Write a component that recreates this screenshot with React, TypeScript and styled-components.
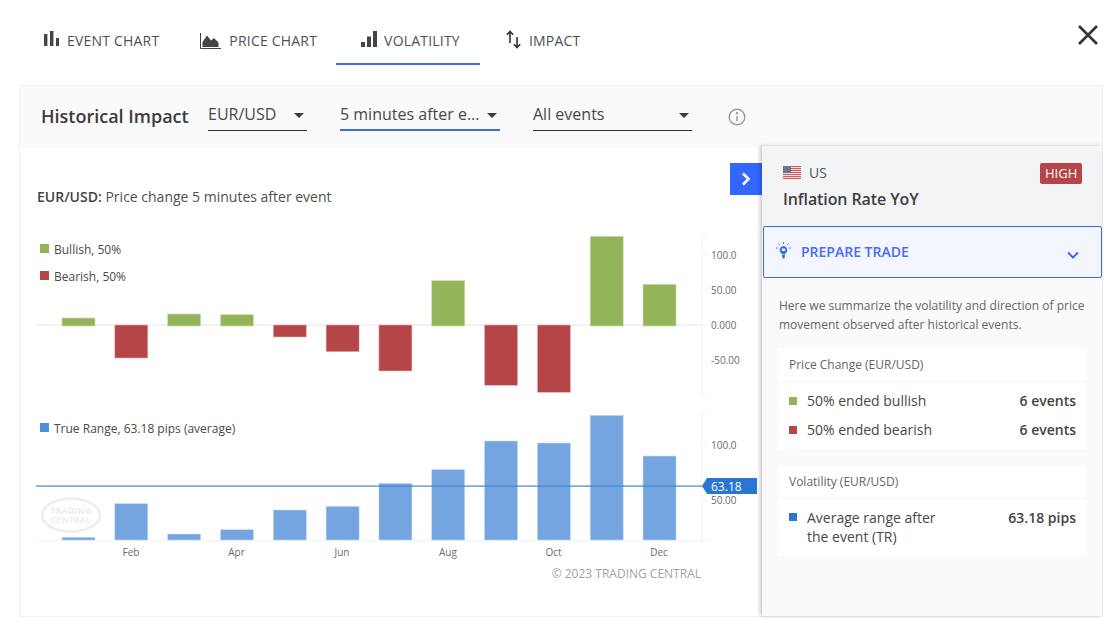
import React from "react";
import styled, { createGlobalStyle } from "styled-components";

const Global = createGlobalStyle`
  html, body { margin: 0; padding: 0; background: #fff; overflow: hidden; }
  body { font-family: "Open Sans", "Liberation Sans", sans-serif; color: #444; }
  * { box-sizing: border-box; }
`;

const Page = styled.div`
  width: 1113px;
  height: 642px;
  display: flex;
  flex-direction: column;
`;
const TopBar = styled.div`
  height: 65px;
  display: flex;
  padding: 0 15px 0 18px;
  justify-content: space-between;
`;
const Tabs = styled.div`
  display: flex;
`;
const Tab = styled.div<{ $active?: boolean; $end: number; $gap?: number }>`
  height: 65px;
  display: flex;
  align-items: center;
  gap: ${(p) => p.$gap ?? 8}px;
  padding: 32px ${(p) => p.$end}px 14px 20px;
  font-size: 14px;
  letter-spacing: 0.2px;
  font-weight: 500;
  color: #505050;
  white-space: nowrap;
  border-bottom: 2px solid ${(p) => (p.$active ? "#3b6cf0" : "transparent")};
`;
const TabIcon = styled.span<{ $lift: number }>`
  width: 21px;
  height: 20px;
  display: flex;
  justify-content: flex-end;
  align-items: center;
  margin-bottom: ${(p) => p.$lift}px;
`;
const CloseButton = styled.div`
  padding-top: 25px;
  line-height: 0;
`;
const Panel = styled.div`
  margin: 20px 10px 0 19px;
  height: 532px;
  border: 1px solid #f2f2f2;
  display: flex;
  flex-direction: column;
`;
const FilterBar = styled.div`
  height: 60px;
  background: #fafafa;
  display: flex;
  align-items: center;
  padding-left: 21px;
`;
const Heading = styled.div`
  font-size: 18px;
  font-weight: 600;
  color: #3c3c3c;
  width: 147px;
  white-space: nowrap;
  margin-right: 20px;
`;
const Select = styled.div<{ $width: number; $focus?: boolean }>`
  width: ${(p) => p.$width}px;
  height: 32px;
  margin-right: 33px;
  margin-top: -2px;
  display: flex;
  align-items: center;
  justify-content: space-between;
  padding: 0 3px 1px 0;
  font-size: 16px;
  color: #484848;
  white-space: nowrap;
  border-bottom: ${(p) => (p.$focus ? "2px solid #3b6cf0" : "1px solid #333")};
`;
const Caret = styled.span`
  width: 0;
  height: 0;
  border-left: 5.5px solid transparent;
  border-right: 5.5px solid transparent;
  border-top: 5.5px solid #3c3c3c;
  margin-top: 3px;
`;
const InfoIcon = styled.span`
  margin-left: 3px;
  line-height: 0;
  margin-top: 2px;
`;
const Body = styled.div`
  flex: 1;
  display: flex;
  min-height: 0;
`;
const ChartArea = styled.div`
  width: 742px;
  position: relative;
  border-top: 1px solid #f5f5f5;
  background: #fff;
`;
const ChartTitle = styled.div`
  padding: 40px 0 0 17px;
  height: 60px;
  font-size: 14px;
  line-height: 20px;
  color: #505050;
  b {
    font-weight: 600;
    color: #444;
  }
`;
const ChartSvg = styled.svg`
  display: block;
  font-family: "Open Sans", "Liberation Sans", sans-serif;
`;
const CollapseButton = styled.div`
  position: absolute;
  right: 0;
  top: 16px;
  width: 32px;
  height: 32px;
  background: #3366ff;
  display: flex;
  align-items: center;
  justify-content: center;
`;
const Sidebar = styled.div`
  width: 340px;
  background: #fafafa;
  box-shadow: -2px 0 4px rgba(0, 0, 0, 0.22);
  position: relative;
`;
const EventHead = styled.div`
  height: 80px;
  background: #f3f4f6;
  padding: 17px 20px 0 21px;
`;
const EventRow = styled.div`
  height: 21px;
  display: flex;
  align-items: center;
  font-size: 14px;
  color: #555;
`;
const CountryName = styled.span`
  margin-top: -2px;
`;
const Flag = styled.span`
  line-height: 0;
  margin-right: 8px;
  margin-top: -2px;
`;
const Impact = styled.span`
  margin-left: auto;
  height: 21px;
  padding: 0 5px;
  width: 42px;
  background: #b54547;
  border-radius: 2px;
  color: #fff;
  font-size: 13px;
  line-height: 21px;
  text-align: center;
`;
const EventTitle = styled.div`
  margin-top: 4px;
  font-size: 16px;
  line-height: 22px;
  font-weight: 600;
  letter-spacing: -0.1px;
  color: #3f3f3f;
`;
const Prepare = styled.div`
  height: 52px;
  margin-left: 1px;
  border: 1px solid #3b6cf0;
  border-radius: 2px;
  background: #f3f6ff;
  display: flex;
  align-items: center;
  padding: 0 22px 2px 12px;
  color: #4a6cf7;
  font-size: 14px;
  font-weight: 600;
`;
const PrepareLabel = styled.span`
  margin-left: 10px;
  flex: 1;
`;
const BulbWrap = styled.span`
  line-height: 0;
  margin-bottom: 2px;
`;
const ChevronWrap = styled.span`
  line-height: 0;
  margin-top: 7px;
`;
const Description = styled.p`
  margin: 18px 16px 14px 17px;
  font-size: 12px;
  line-height: 19px;
  color: #666;
  white-space: nowrap;
`;
const Card = styled.div`
  margin: 0 16px 16px 17px;
  background: #fff;
`;
const CardHead = styled.div`
  height: 34px;
  padding: 0 10px;
  border-bottom: 1px solid #f5f5f5;
  font-size: 12px;
  line-height: 33px;
  color: #666;
`;
const CardBody = styled.div<{ $pad: string }>`
  padding: ${(p) => p.$pad};
`;
const StatRow = styled.div<{ $top?: boolean }>`
  min-height: 29px;
  display: flex;
  align-items: ${(p) => (p.$top ? "flex-start" : "center")};
  font-size: 14px;
  line-height: 19px;
  color: #484848;
`;
const Swatch = styled.span<{ $color: string; $top?: boolean }>`
  width: 8px;
  height: 8px;
  background: ${(p) => p.$color};
  margin-right: 10px;
  margin-top: ${(p) => (p.$top ? "5px" : "0")};
  flex: none;
`;
const StatValue = styled.span`
  margin-left: auto;
  font-weight: 600;
  color: #444;
`;

const x = (i: number) => 62 + i * 52.82;
const top = [318, 358, 314, 314.7, 337, 351.7, 371, 280.7, 385.3, 392.3, 236.3, 284.3];
const bottom = [537.3, 503.7, 534, 529.7, 510, 506.3, 483.3, 469.7, 441, 443, 415.3, 456];
const months: [string, number][] = [["Feb", 131], ["Apr", 236.5], ["Jun", 342], ["Aug", 448], ["Oct", 553.5], ["Dec", 659]];
const GRID = "#f1f2f4";

const Chart = () => (
  <ChartSvg width={742} height={408} viewBox="20 207 742 408">
    {/* legend */}
    <rect x={40} y={244} width={9} height={9} fill="#94b45a" />
    <text x={54} y={254} fontSize={12} fill="#4a4a4a">Bullish, 50%</text>
    <rect x={40} y={271} width={9} height={9} fill="#b54547" />
    <text x={54} y={281} fontSize={12} fill="#4a4a4a">Bearish, 50%</text>
    <rect x={40} y={423} width={9} height={9} fill="#4f8fdc" />
    <text x={54} y={433} fontSize={12} fill="#4a4a4a">True Range, 63.18 pips (average)</text>

    {/* top chart grid */}
    <rect x={36} y={324} width={666} height={2} fill="#f3f3f3" />
    <path d="M708 235H702V394H708M702 255H708M702 290H708M702 325H708M702 360H708" fill="none" stroke={GRID} />
    {top.map((v, i) => {
      const up = v < 325;
      const yy = up ? v : 325;
      const h = up ? 326 - v : v - 325;
      return (
        <rect key={i} x={x(i)} y={yy} width={33} height={h} fill={up ? "#94b45a" : "#b54547"} stroke={up ? "#cfdcb4" : "#e0b4b5"} strokeWidth={0.6} />
      );
    })}
    {[["100.0", 259], ["50.00", 294], ["0.000", 328.5], ["-50.00", 363.5]].map(([t, y]) => (
      <text key={t} x={711} y={y} fontSize={10} fill="#6b6b6b">{t}</text>
    ))}

    {/* watermark */}
    <ellipse cx={71} cy={515} rx={29} ry={16.5} fill="none" stroke="#ededed" strokeWidth={2.5} />
    <text x={71} y={514} fontSize={8.5} fontWeight={700} letterSpacing={0.4} fill="#ededed" textAnchor="middle">TRADING</text>
    <text x={71} y={523} fontSize={8.5} fontWeight={700} letterSpacing={0.4} fill="#ededed" textAnchor="middle">CENTRAL</text>

    {/* bottom chart */}
    <path d="M36 540.5H708M708 413.5H702V546M702 445.5H708M702 500.5H708M36.5 540V546" fill="none" stroke={GRID} />
    {months.map(([m, mx]) => (
      <g key={m}>
        <line x1={mx} x2={mx} y1={540} y2={546} stroke={GRID} />
        <text x={mx} y={556} fontSize={10} fill="#6b6b6b" textAnchor="middle">{m}</text>
      </g>
    ))}
    {bottom.map((v, i) => (
      <rect key={i} x={x(i)} y={v} width={33} height={540 - v} fill="#74a5e0" stroke="#c6d9f2" strokeWidth={0.6} />
    ))}
    <rect x={36} y={485.5} width={666} height={1.2} fill="#3f86d9" />
    <path d="M702 486L707 478H757V494H707Z" fill="#2a75d3" />
    <text x={711} y={490.5} fontSize={12} fill="#fff">63.18</text>
    <text x={711} y={449} fontSize={10} fill="#6b6b6b">100.0</text>
    <text x={711} y={504} fontSize={10} fill="#6b6b6b">50.00</text>
    <text x={701} y={578} fontSize={12} fill="#a3a3a3" textAnchor="end">© 2023 TRADING CENTRAL</text>
  </ChartSvg>
);

const UsFlag = () => (
  <svg width={18} height={13} viewBox="0 0 18 13">
    <rect width={18} height={13} fill="#f6dcdc" />
    {[0, 2, 4, 6, 8, 10, 12].map((y) => (
      <rect key={y} y={y} width={18} height={1} fill="#cf5a60" />
    ))}
    <rect width={8} height={7} fill="#6f7497" />
  </svg>
);

const BulbIcon = () => (
  <svg width={15} height={17} viewBox="0 0 15 17">
    <path d="M7.5 4a3.9 3.9 0 0 0-2.5 6.9l.9 1.1h3.2l.9-1.1A3.9 3.9 0 0 0 7.5 4Z" fill="#3b6cf0" />
    <path d="M5.9 12.5h3.2l-.6 4H6.5Z" fill="#3b6cf0" />
    <rect x={5.6} y={6.6} width={3.8} height={2.4} rx={1} fill="#f3f6ff" />
    <path d="M7.5 0v2M2.5 1.5l1.2 1.4M12.5 1.5l-1.2 1.4M0 6h1.7M13.3 6H15" stroke="#3b6cf0" strokeWidth={1} fill="none" />
  </svg>
);

export default function App() {
  return (
    <Page>
      <Global />
      <TopBar>
        <Tabs>
          <Tab $end={21}>
            <TabIcon $lift={4}>
              <svg width={15} height={16} viewBox="0 0 15 16" fill="#444">
                <rect x={0} y={3} width={3.4} height={12} />
                <rect x={6} y={0} width={3.4} height={15} />
                <rect x={12} y={7} width={3} height={8} />
              </svg>
            </TabIcon>
            EVENT CHART
          </Tab>
          <Tab $end={19}>
            <TabIcon $lift={0}>
              <svg width={21} height={16} viewBox="0 0 21 16">
                <path d="M.5 0v15.5H21" fill="none" stroke="#444" />
                <path d="M2.5 14V9L7 2.5l4 5 3-2.5 4.5 4.5V14Z" fill="#444" />
              </svg>
            </TabIcon>
            PRICE CHART
          </Tab>
          <Tab $active $end={20} $gap={7}>
            <TabIcon $lift={3}>
              <svg width={16} height={16} viewBox="0 0 16 16" fill="#444">
                <rect x={0} y={11} width={4} height={5} />
                <rect x={6} y={5.5} width={4} height={10.5} />
                <rect x={12} y={0} width={4} height={16} />
              </svg>
            </TabIcon>
            VOLATILITY
          </Tab>
          <Tab $end={20}>
            <TabIcon $lift={2}>
              <svg width={15} height={19} viewBox="0 0 15 19" fill="none" stroke="#333" strokeWidth={1.6}>
                <path d="M4 13V1.5M.8 4.7 4 1.5l3.2 3.2" />
                <path d="M11 7v10.5M7.8 14.3l3.2 3.2 3.2-3.2" />
              </svg>
            </TabIcon>
            IMPACT
          </Tab>
        </Tabs>
        <CloseButton>
          <svg width={20} height={20} viewBox="0 0 20 20" fill="none" stroke="#333" strokeWidth={2.6}>
            <path d="M1 1 19 19M19 1 1 19" />
          </svg>
        </CloseButton>
      </TopBar>
      <Panel>
        <FilterBar>
          <Heading>Historical Impact</Heading>
          <Select $width={99}>EUR/USD<Caret /></Select>
          <Select $width={160} $focus>5 minutes after e...<Caret /></Select>
          <Select $width={159}>All events<Caret /></Select>
          <InfoIcon>
            <svg width={18} height={18} viewBox="0 0 18 18" fill="none" stroke="#999" strokeWidth={1.4}>
              <circle cx={9} cy={9} r={7.8} />
              <path d="M9 8v5.2" />
              <circle cx={9} cy={5.3} r={0.5} fill="#999" />
            </svg>
          </InfoIcon>
        </FilterBar>
        <Body>
          <ChartArea>
            <ChartTitle><b>EUR/USD:</b> Price change 5 minutes after event</ChartTitle>
            <Chart />
            <CollapseButton>
              <svg width={12} height={14} viewBox="0 0 12 14" fill="none" stroke="#fff" strokeWidth={2.6}>
                <path d="M3 1.5 8.5 7 3 12.5" />
              </svg>
            </CollapseButton>
          </ChartArea>
          <Sidebar>
            <EventHead>
              <EventRow>
                <Flag><UsFlag /></Flag>
                <CountryName>US</CountryName>
                <Impact>HIGH</Impact>
              </EventRow>
              <EventTitle>Inflation Rate YoY</EventTitle>
            </EventHead>
            <Prepare>
              <BulbWrap><BulbIcon /></BulbWrap>
              <PrepareLabel>PREPARE TRADE</PrepareLabel>
              <ChevronWrap>
                <svg width={12} height={8} viewBox="0 0 12 8" fill="none" stroke="#3b6cf0" strokeWidth={2}>
                  <path d="M1 1.5 6 6.5 11 1.5" />
                </svg>
              </ChevronWrap>
            </Prepare>
            <Description>
              Here we summarize the volatility and direction of price<br />
              movement observed after historical events.
            </Description>
            <Card>
              <CardHead>Price Change (EUR/USD)</CardHead>
              <CardBody $pad="4px 10px 5px">
                <StatRow><Swatch $color="#94b45a" />50% ended bullish<StatValue>6 events</StatValue></StatRow>
                <StatRow><Swatch $color="#b54547" />50% ended bearish<StatValue>6 events</StatValue></StatRow>
              </CardBody>
            </Card>
            <Card>
              <CardHead>Volatility (EUR/USD)</CardHead>
              <CardBody $pad="9px 10px 10px">
                <StatRow $top>
                  <Swatch $color="#2a75d3" $top />
                  <span>Average range after<br />the event (TR)</span>
                  <StatValue>63.18 pips</StatValue>
                </StatRow>
              </CardBody>
            </Card>
          </Sidebar>
        </Body>
      </Panel>
    </Page>
  );
}
